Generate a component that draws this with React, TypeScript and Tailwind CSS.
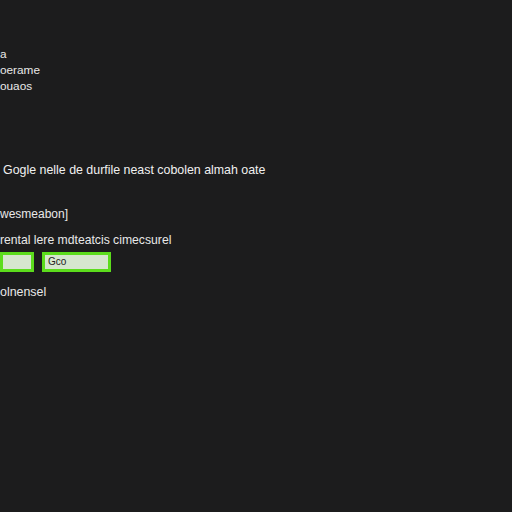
import React from 'react';

const App: React.FC = () => {
  return (
    <div className="w-[512px] h-[512px] bg-[#1c1c1d] text-[#e8e8e8] overflow-hidden" style={{ fontFamily: '"Liberation Sans", Arial, sans-serif' }}>
      {/* Top menu fragments */}
      <div className="pt-[46px] flex flex-col text-[11.8px] leading-[16px]">
        <span>a</span>
        <span>oerame</span>
        <span>ouaos</span>
      </div>

      {/* Heading line */}
      <p className="mt-[68px] pl-[3px] text-[12.4px] leading-[16px] text-[#f0f0f0]">
        Gogle nelle de durfile neast cobolen almah oate
      </p>

      {/* Form section */}
      <div className="mt-[28px] flex flex-col text-[12px]">
        <span className="leading-[16px]">wesmeabon]</span>
        <span className="mt-[10px] leading-[16px] text-[12.2px]">rental lere mdteatcis cimecsurel</span>
        <div className="mt-[4px] flex gap-[8px]">
          <div className="w-[34px] h-[20px] border-[3px] border-[#5cdc1c] bg-[#d6e6ce]" />
          <div className="w-[69px] h-[20px] border-[3px] border-[#5cdc1c] bg-[#d6e6ce] flex items-center pl-[3px] text-[10px] text-[#222] leading-none">
            Gco
          </div>
        </div>
        <span className="mt-[12px] leading-[16px] text-[12.4px]">olnensel</span>
      </div>
    </div>
  );
};

export default App;
